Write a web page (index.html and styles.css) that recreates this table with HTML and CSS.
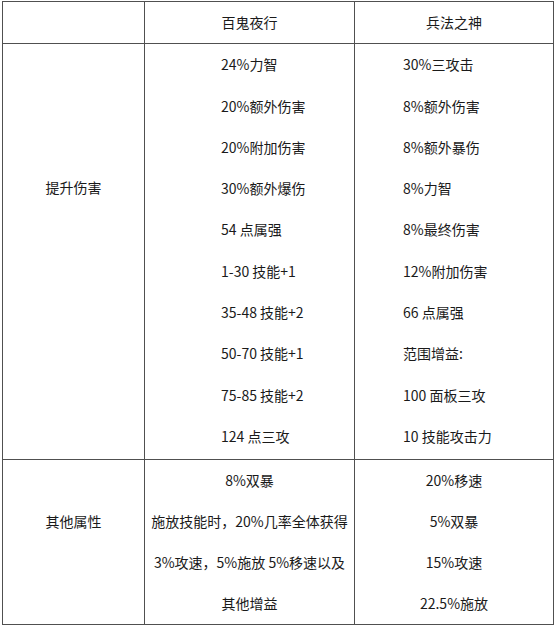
FILE: index.html
```html
<!DOCTYPE html>
<html lang="zh">
<head>
<meta charset="utf-8">
<title>对比</title>
<link rel="stylesheet" href="styles.css">
</head>
<body>
<table class="cmp">
  <colgroup>
    <col class="c1">
    <col class="c2">
    <col class="c3">
  </colgroup>
  <tr class="head">
    <td></td>
    <td class="center">百鬼夜行</td>
    <td class="center">兵法之神</td>
  </tr>
  <tr class="row1">
    <td class="label label1">提升伤害</td>
    <td class="list list2">
      <div>24%力智</div>
      <div>20%额外伤害</div>
      <div>20%附加伤害</div>
      <div>30%额外爆伤</div>
      <div>54 点属强</div>
      <div>1-30 技能+1</div>
      <div>35-48 技能+2</div>
      <div>50-70 技能+1</div>
      <div>75-85 技能+2</div>
      <div>124 点三攻</div>
    </td>
    <td class="list list3">
      <div>30%三攻击</div>
      <div>8%额外伤害</div>
      <div>8%额外暴伤</div>
      <div>8%力智</div>
      <div>8%最终伤害</div>
      <div>12%附加伤害</div>
      <div>66 点属强</div>
      <div>范围增益:</div>
      <div>100 面板三攻</div>
      <div>10 技能攻击力</div>
    </td>
  </tr>
  <tr class="row2">
    <td class="label label2">其他属性</td>
    <td class="list center">
      <div>8%双暴</div>
      <div>施放技能时，20%几率全体获得</div>
      <div>3%攻速，5%施放 5%移速以及</div>
      <div>其他增益</div>
    </td>
    <td class="list center">
      <div>20%移速</div>
      <div>5%双暴</div>
      <div>15%攻速</div>
      <div>22.5%施放</div>
    </td>
  </tr>
</table>
</body>
</html>
```
FILE: styles.css
```css
html, body {
  margin: 0;
  padding: 0;
  background: #ffffff;
}

body {
  font-family: "Noto Sans CJK SC", "Noto Sans", sans-serif;
  font-size: 14px;
  color: #1a1a1a;
}

.cmp {
  border-collapse: collapse;
  margin: 1px 0 0 2px;
  width: 551px;
  table-layout: fixed;
}

.c1 { width: 142px; }
.c2 { width: 210px; }
.c3 { width: 199px; }

.cmp td {
  border: 1px solid #505050;
  padding: 0;
  line-height: 41.3px;
  vertical-align: top;
  white-space: nowrap;
}

.cmp .head td {
  height: 41px;
  vertical-align: middle;
}

.cmp .center {
  text-align: center;
}

.cmp .label {
  text-align: center;
}

.cmp .label1 {
  padding-top: 123px;
}

.cmp .label2 {
  padding-top: 41px;
}

.cmp .row1 .list {
  padding-bottom: 2px;
}

.cmp .row2 .list {
  line-height: 41px;
}

.cmp .list2 {
  padding-left: 76px;
}

.cmp .list3 {
  padding-left: 48px;
}
```
